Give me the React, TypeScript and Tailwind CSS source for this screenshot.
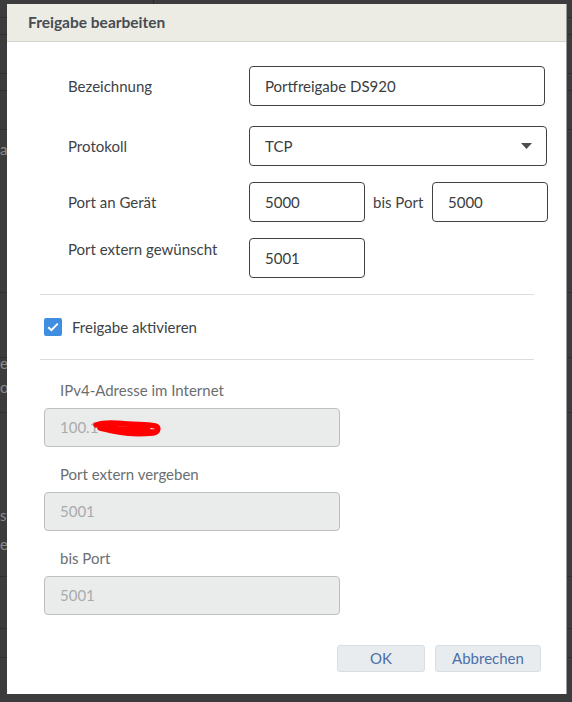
import React from "react";

const font = { fontFamily: 'Lato, "Open Sans", sans-serif' };

function TextInput({ value, className = "" }: { value: string; className?: string }) {
  return (
    <div
      className={`flex h-[40px] shrink-0 items-center rounded-[4px] border border-[#3f4347] bg-white pl-[15px] text-[15px] text-[#3a3d40] ${className}`}
    >
      {value}
    </div>
  );
}

function ReadOnlyInput({ value, children }: { value: string; children?: React.ReactNode }) {
  return (
    <div className="relative flex h-[39px] w-[296px] items-center rounded-[4px] border border-[#bdbfc0] bg-[#eaebeb] pl-[15px] text-[15px] text-[#a9abad]">
      {value}
      {children}
    </div>
  );
}

function Divider() {
  return <div className="h-px bg-[#dcdcdc]" />;
}

// page behind the modal overlay, mostly hidden by the dialog
function Backdrop() {
  const rows = [17, 34, 73, 90, 129, 292, 357, 412, 576, 628, 657];
  return (
    <div className="absolute inset-0 bg-[#3c3c3c] text-[15px] text-[#8a8a8a]">
      {rows.map((y) => (
        <div key={y} className="absolute left-0 right-0 h-px bg-[#2e2e2e]" style={{ top: y }} />
      ))}
      <div className="absolute left-[153px] top-0 h-[4px] w-px bg-[#2a2a2a]" />
      <span className="absolute left-0 top-[138px]">aktiv</span>
      <span className="absolute left-0 top-[352px]">eingerichtet</span>
      <span className="absolute left-0 top-[376px]">oder</span>
      <span className="absolute left-0 top-[504px]">status</span>
      <span className="absolute left-0 top-[533px]">extern</span>
    </div>
  );
}

export default function App() {
  return (
    <div className="relative h-[702px] w-[572px] overflow-hidden" style={font}>
      <Backdrop />

      <div className="absolute left-[7px] top-[4px] flex h-[690px] w-[559px] flex-col bg-white shadow-[1px_0_0_#9a9a9a]">
        <div className="flex h-[38px] items-center border-b border-[#d6d6d0] bg-[#ecebe4] pl-[21px] text-[15.5px] font-bold text-[#474c52]">
          Freigabe bearbeiten
        </div>

        <div className="flex flex-1 flex-col pl-[33px] pr-[32px] pt-[24px]">
          <div className="flex flex-col pl-[28px]">
            <div className="flex items-center">
              <div className="w-[181px] shrink-0 text-[15px] text-[#3e4246]">Bezeichnung</div>
              <TextInput value="Portfreigabe DS920" className="h-[39px] w-[296px]" />
            </div>
            <div className="mt-[20px] flex items-center">
              <div className="w-[181px] shrink-0 text-[15px] text-[#3e4246]">Protokoll</div>
              <div className="flex h-[40px] w-[298px] shrink-0 items-center justify-between rounded-[4px] border border-[#3f4347] bg-white pl-[15px] pr-[14px] text-[15px] text-[#3a3d40]">
                TCP
                <svg width="11" height="6" viewBox="0 0 11 6">
                  <path d="M0 0h11L5.5 6z" fill="#4b4f54" />
                </svg>
              </div>
            </div>
            <div className="mt-[16px] flex items-center">
              <div className="w-[181px] shrink-0 text-[15px] text-[#3e4246]">Port an Gerät</div>
              <TextInput value="5000" className="w-[116px]" />
              <span className="w-[67px] shrink-0 pl-[8px] text-[15px] text-[#3e4246]">bis Port</span>
              <TextInput value="5000" className="w-[116px]" />
            </div>
            <div className="mt-[16px] flex items-start">
              <div className="w-[181px] shrink-0 text-[15px] text-[#3e4246]">Port extern gewünscht</div>
              <TextInput value="5001" className="w-[116px]" />
            </div>
          </div>

          <div className="mt-[16px]">
            <Divider />
          </div>

          <label className="flex items-center gap-[10px] pb-[20px] pl-[4px] pt-[21px] text-[15px] text-[#3e4246]">
            <span className="flex h-[18px] w-[18px] items-center justify-center rounded-[2px] bg-[#3f8ee0]">
              <svg width="12" height="10" viewBox="0 0 12 10">
                <path d="M1.2 5.2 4.4 8.2 10.8 1.6" fill="none" stroke="#fff" strokeWidth="2" />
              </svg>
            </span>
            Freigabe aktivieren
          </label>

          <Divider />

          <div className="flex flex-col pl-[4px] pt-[20px]">
            <div className="mb-[8px] h-[20px] pl-[16px] text-[15px] leading-[20px] text-[#6b6e71]">IPv4-Adresse im Internet</div>
            <ReadOnlyInput value="100.1">
              <svg className="absolute left-[48px] top-[9px]" width="72" height="22" viewBox="0 0 72 22">
                <path
                  d="M3 7c9-3 20-2 32-1 9 1 18 0 27 2 4 1 4 6-2 7-10 1-24 1-34-1-7-1-14-3-19-4 8-1 18 2 28 3 9 1 20 0 27 1M8 10c12 1 27 2 47 2"
                  fill="none"
                  stroke="#ff0000"
                  strokeWidth="5.5"
                  strokeLinecap="round"
                  strokeLinejoin="round"
                />
              </svg>
            </ReadOnlyInput>

            <div className="mb-[8px] mt-[17px] h-[20px] pl-[16px] text-[15px] leading-[20px] text-[#6b6e71]">Port extern vergeben</div>
            <ReadOnlyInput value="5001" />

            <div className="mb-[8px] mt-[17px] h-[20px] pl-[16px] text-[15px] leading-[20px] text-[#6b6e71]">bis Port</div>
            <ReadOnlyInput value="5001" />
          </div>

          <div className="mr-[-7px] mt-[30px] flex justify-end gap-[10px]">
            <button className="h-[27px] w-[88px] rounded-[3px] border border-[#d9dee3] bg-[#e8ecef] text-[15px] text-[#4c6fa8]">
              OK
            </button>
            <button className="h-[27px] w-[106px] rounded-[3px] border border-[#d9dee3] bg-[#e8ecef] text-[15px] text-[#4c6fa8]">
              Abbrechen
            </button>
          </div>
        </div>
      </div>
    </div>
  );
}
